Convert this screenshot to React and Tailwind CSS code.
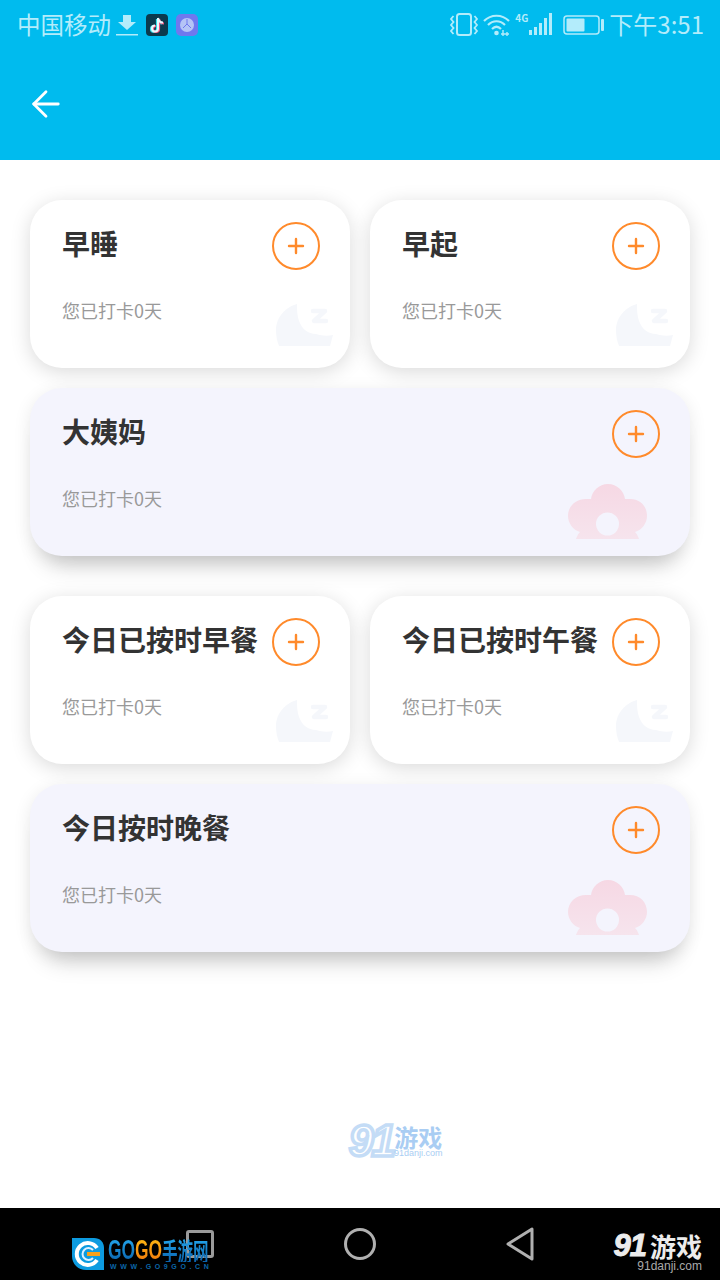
import React from "react";
import { ArrowLeft, Plus } from "lucide-react";

const cjk = "font-['Noto_Sans_CJK_SC','Noto_Sans',sans-serif]";

const Moon = () => (
  <svg className="absolute right-[16px] bottom-[22px]" width="58" height="42" viewBox="0 0 58 42" fill="none">
    <path
      d="M3 42 C1 37 0 32 0 26 C0 14 9 3 21 0 C21 6 21 11 23 17 C26 25 32 30 40 30 C46 32 52 32 57 31 C56 35 55 38 54 42 Z"
      fill="#f5f7fb"
    />
    <path d="M37 7 H49 L38 17 H50" stroke="#f5f7fb" strokeWidth="4.500" strokeLinejoin="round" strokeLinecap="round" />
  </svg>
);

const Flower = () => (
  <svg className="absolute right-[42px] bottom-[16px]" width="80" height="56" viewBox="0 0 80 56">
    <defs>
      <linearGradient id="petal" x1="0" y1="0" x2="0" y2="1">
        <stop offset="0" stopColor="#f6d8e4" />
        <stop offset="1" stopColor="#f6e4ed" />
      </linearGradient>
    </defs>
    <path
      d="M8 55 C9 52 10 50 12 48 C5 46 0 39 0 32 C0 22 8 15 18 15 L23 15 C24 7 31 0 40 0 C49 0 56 7 57 15 L62 15 C72 15 79 22 79 32 C79 39 74 46 67 48 C69 50 70 52 71 55 Z"
      fill="url(#petal)"
    />
    <circle cx="39.500" cy="40" r="11.500" fill="#f4f4fd" />
  </svg>
);

const Card = ({ title, wide }) => (
  <div
    className={`relative h-[168px] rounded-[32px] ${
      wide
        ? "w-full bg-[#f4f4fd] shadow-[0_4px_18px_rgba(0,0,0,0.09),0_22px_24px_-14px_rgba(0,0,0,0.2)]"
        : "flex-1 bg-white shadow-[0_4px_20px_rgba(0,0,0,0.15)]"
    }`}
  >
    <div className="flex items-start justify-between pl-[32px] pr-[30px] pt-[22px]">
      <h3 className="text-[28px] leading-[42px] font-bold whitespace-nowrap text-[#333333]">{title}</h3>
      <button className="flex h-[48px] w-[48px] shrink-0 items-center justify-center rounded-full border-2 border-[#ff8a2b]">
        <Plus size={24} strokeWidth={2.400} color="#ff8a2b" />
      </button>
    </div>
    <p className="mt-[27px] pl-[32px] text-[18px] leading-[26px] text-[#999999]">您已打卡0天</p>
    {wide ? <Flower /> : <Moon />}
  </div>
);

const StatusIcons = () => (
  <svg width="152" height="28" viewBox="0 0 152 28" fill="none">
    {/* vibrate */}
    <rect x="9" y="3" width="14" height="21" rx="2.500" stroke="#b3ecfb" strokeWidth="2" />
    <path d="M5.500 5 L3 8 L5.500 11 L3 14 L5.500 17 L3 20 L5.500 23 M26.500 5 L29 8 L26.500 11 L29 14 L26.500 17 L29 20 L26.500 23" stroke="#b3ecfb" strokeWidth="1.800" />
    {/* wifi */}
    <path d="M36 10 C43 3 54 3 61 10 M40 14 C45 9 52 9 57 14 M44 18 C47 15 50 15 53 18" stroke="#b3ecfb" strokeWidth="2.200" />
    <circle cx="48.500" cy="22" r="2.300" fill="#b3ecfb" />
    <path d="M55 19 V25 M59 21 V25 M53 23 H61" stroke="#b3ecfb" strokeWidth="1.400" />
    {/* signal */}
    <rect x="81" y="19" width="3" height="5" fill="#b3ecfb" />
    <rect x="86" y="16" width="3" height="8" fill="#b3ecfb" />
    <rect x="91" y="12" width="3" height="12" fill="#b3ecfb" />
    <rect x="96" y="7" width="3" height="17" fill="#b3ecfb" />
    <rect x="101" y="2" width="3" height="22" fill="#b3ecfb" />
  </svg>
);

const Battery = () => (
  <svg width="41" height="20" viewBox="0 0 41 20" fill="none">
    <rect x="1" y="1" width="35" height="18" rx="3" stroke="#b3ecfb" strokeWidth="1.500" />
    <rect x="3.500" y="3.500" width="18" height="13" rx="1" fill="#b3ecfb" />
    <rect x="38" y="4" width="3" height="12" rx="1" fill="#b3ecfb" />
  </svg>
);

const StatusBar = () => (
  <div className={`flex h-[50px] items-center justify-between pl-[17px] pr-[16px] text-[23.500px] text-[#b3ecfb] ${cjk}`}>
    <div className="flex items-center">
      <span className="-mt-[2px] leading-[50px]">中国移动</span>
      <svg className="ml-[5px]" width="22" height="22" viewBox="0 0 22 22">
        <path d="M7 1 H15 V8 H20 L11 16 L2 8 H7 Z" fill="#b3ecfb" />
        <rect x="0" y="20" width="22" height="1.500" fill="#b3ecfb" />
      </svg>
      <svg className="ml-[8px]" width="22" height="22" viewBox="0 0 22 22" fill="none">
        <rect width="22" height="22" rx="4" fill="#0b3a4d" />
        <path d="M11 5 V15 A3 3 0 1 1 8 12 M11 5 C11.500 8 13.500 9.500 16 9.500" stroke="#35e0ea" strokeWidth="2.200" />
        <path d="M13 5 V15 A3 3 0 1 1 10 12 M13 5 C13.500 8 15.500 9.500 18 9.500" stroke="#f0567e" strokeWidth="2.200" />
        <path d="M12 4 V14.500 A3 3 0 1 1 9 11.500 M12 4 C12.500 7 14.500 8.500 17 8.500" stroke="#e6fbff" strokeWidth="2" />
      </svg>
      <svg className="ml-[8px]" width="22" height="22" viewBox="0 0 22 22">
        <rect width="22" height="22" rx="5" fill="#6f78ee" />
        <circle cx="11" cy="11" r="7" fill="#b5c4f6" />
        <path d="M7 14 L11 10 L15 14 M11 5 L11 10" stroke="#6f78ee" strokeWidth="1" fill="none" />
      </svg>
    </div>
    <div className="flex items-center">
      <div className="relative">
        <StatusIcons />
        <span className="absolute left-[67px] top-[1px] text-[10px] leading-[12px] font-bold">4G</span>
      </div>
      <div className="-ml-[37px]">
        <Battery />
      </div>
      <span className="-mt-[2px] ml-[5px] text-[24px] leading-[50px] whitespace-nowrap">下午3:51</span>
    </div>
  </div>
);

export default function App() {
  return (
    <div className={`relative flex h-[1280px] w-[720px] flex-col overflow-hidden bg-white ${cjk}`}>
      <header className="h-[160px] bg-[#00bbee]">
        <StatusBar />
        <div className="pl-[25px] pt-[33px]">
          <ArrowLeft size={42} strokeWidth={1.600} color="#ffffff" />
        </div>
      </header>

      <main className="flex flex-1 flex-col gap-[20px] px-[30px] pt-[40px]">
        <div className="flex gap-[20px]">
          <Card title="早睡" />
          <Card title="早起" />
        </div>
        <Card title="大姨妈" wide />
        <div className="mt-[20px] flex gap-[20px]">
          <Card title="今日已按时早餐" />
          <Card title="今日已按时午餐" />
        </div>
        <Card title="今日按时晚餐" wide />
      </main>

      <nav className="flex h-[72px] items-center justify-center gap-[130px] bg-black">
        <div className="h-[28px] w-[28px] rounded-[3px] border-[3px] border-[#9a9a9a]" />
        <div className="h-[32px] w-[32px] rounded-full border-[3px] border-[#b0b0b0]" />
        <svg width="28" height="34" viewBox="0 0 28 34" fill="none">
          <path d="M26 2 V32 L2 17 Z" stroke="#b0b0b0" strokeWidth="3" strokeLinejoin="round" />
        </svg>
      </nav>

      {/* watermarks laid over the page */}
      <div className="absolute left-[349px] top-[1120px] flex h-[42px] w-[96px] items-start">
        <span className="w-[45px] text-[44px] leading-[42px] font-bold italic tracking-[-2px] text-white [-webkit-text-stroke:3.500px_#c4dcf6] font-['Liberation_Sans',sans-serif]">
          91
        </span>
        <div className="mt-[4px] flex flex-col items-center">
          <span className="text-[24px] leading-[25px] font-bold text-[#a9cdf3] whitespace-nowrap">游戏</span>
          <span className="text-[9px] leading-[9px] text-[#a9cdf3] font-['Liberation_Sans',sans-serif]">91danji.com</span>
        </div>
      </div>

      <div className="absolute left-[72px] top-[1238px] flex items-start">
        <svg width="32" height="32" viewBox="0 0 32 32" fill="none">
          <path d="M0 0 H22 C28 0 32 4 32 10 V32 H14 C6 32 0 26 0 18 Z" fill="#0d9be0" />
          <path d="M25 10 A11 11 0 1 0 25 22" stroke="#ffffff" strokeWidth="4" />
          <path d="M21 12 A6 6 0 1 0 21 20" stroke="#dcefff" strokeWidth="2" />
          <rect x="15" y="14" width="13" height="4" fill="#f7a11a" />
        </svg>
        <div className="ml-[4px] flex flex-col">
          <div className="flex h-[24px] w-[105px] origin-left scale-x-[0.62] items-center text-[25px] leading-[24px] font-bold whitespace-nowrap">
            <span className="bg-gradient-to-b from-[#25a8ee] to-[#0a62ad] bg-clip-text text-[28px] text-transparent font-['Liberation_Sans',sans-serif]">GO</span>
            <span className="bg-gradient-to-b from-[#fdb813] to-[#f0780c] bg-clip-text text-[28px] text-transparent font-['Liberation_Sans',sans-serif]">GO</span>
            <span className="bg-gradient-to-b from-[#25a8ee] to-[#0a62ad] bg-clip-text text-transparent">手游网</span>
          </div>
          <span className="mt-[1px] ml-[2px] text-[7px] leading-[8px] font-bold tracking-[3.600px] text-[#0b66a8] font-['Liberation_Sans',sans-serif] whitespace-nowrap">
            WWW.GO9GO.CN
          </span>
        </div>
      </div>

      <div className="absolute right-[18px] top-[1232px] flex flex-col items-end text-[#ececec]">
        <div className="flex h-[27px] items-center">
          <span className="text-[31px] leading-[27px] font-bold italic tracking-[-1px] [-webkit-text-stroke:1px_#ececec] font-['Liberation_Sans',sans-serif]">91</span>
          <span className="ml-[4px] text-[26px] leading-[27px] font-bold">游戏</span>
        </div>
        <span className="text-[12px] leading-[14px] text-[#aaaaaa] font-['Liberation_Sans',sans-serif]">91danji.com</span>
      </div>
    </div>
  );
}
